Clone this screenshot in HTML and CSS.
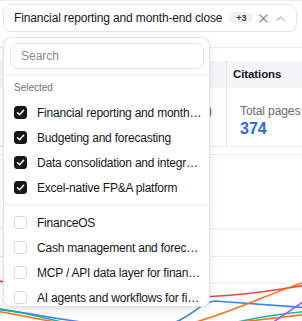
FILE: index.html
```html
<!DOCTYPE html>
<html>
<head>
<meta charset="utf-8">
<link rel="stylesheet" href="styles.css">
</head>
<body>
<div class="topline"></div>
<div class="trigger">
  <span class="trigger-label">Financial reporting and month-end close</span>
  <span class="badge">+3</span>
  <svg class="icon-x" width="9" height="9" viewBox="0 0 9 9"><path d="M1 1L8 8M8 1L1 8" stroke="#8a8a8a" stroke-width="1.2" stroke-linecap="round" fill="none"/></svg>
  <svg class="icon-chev" width="9" height="5" viewBox="0 0 9 5"><path d="M1 4.3L4.5 0.8L8 4.3" stroke="#b5b5b5" stroke-width="1.1" stroke-linecap="round" stroke-linejoin="round" fill="none"/></svg>
</div>

<section class="report">
  <div class="thead">
    <div class="cell c1"></div>
    <div class="cell c2 head">Citations</div>
  </div>
  <div class="tbody">
    <div class="cell c1 num">(100)</div>
    <div class="cell c2 body">
      <div class="muted">Total pages</div>
      <div class="big">374</div>
    </div>
  </div>
</section>

<div class="chart">
  <svg width="302" height="166" viewBox="0 155 302 166">
    <g stroke="#efefef" stroke-width="1">
      <line x1="0" y1="228.5" x2="302" y2="228.5"/>
      <line x1="0" y1="256.5" x2="302" y2="256.5"/>
      <line x1="0" y1="283.5" x2="302" y2="283.5"/>
    </g>
    <g fill="none" stroke-width="1.6" stroke-linecap="round">
      <path d="M-5,280 C60,295 150,300 211,296.5 S280,288 310,285" stroke="#ef4444"/>
      <path d="M-5,309 C50,315 100,330 160,326 C190,322 200,301 215,301 L310,308" stroke="#3b82f6"/>
      <path d="M-5,308 C50,316 100,336 150,336 C200,336 230,318 310,311" stroke="#14b8a6"/>
      <path d="M-5,311 C40,318 80,330 140,330 C200,330 250,300 310,280" stroke="#f97316"/>
      <path d="M232,323 L310,314" stroke="#f97316"/>
      <path d="M272,323 L310,297" stroke="#a855f7"/>
    </g>
  </svg>
</div>

<div class="dropdown">
  <div class="search-wrap">
    <div class="search">Search</div>
  </div>
  <div class="group first">
    <div class="group-label">Selected</div>
    <div class="item"><span class="box checked"><svg width="9" height="9" viewBox="0 0 9 9"><path d="M1.5 4.8L3.6 6.8L7.6 2.3" stroke="#fff" stroke-width="1.5" fill="none" stroke-linecap="round" stroke-linejoin="round"/></svg></span><span class="label">Financial reporting and month-end close</span></div>
    <div class="item"><span class="box checked"><svg width="9" height="9" viewBox="0 0 9 9"><path d="M1.5 4.8L3.6 6.8L7.6 2.3" stroke="#fff" stroke-width="1.5" fill="none" stroke-linecap="round" stroke-linejoin="round"/></svg></span><span class="label">Budgeting and forecasting</span></div>
    <div class="item"><span class="box checked"><svg width="9" height="9" viewBox="0 0 9 9"><path d="M1.5 4.8L3.6 6.8L7.6 2.3" stroke="#fff" stroke-width="1.5" fill="none" stroke-linecap="round" stroke-linejoin="round"/></svg></span><span class="label">Data consolidation and integration</span></div>
    <div class="item"><span class="box checked"><svg width="9" height="9" viewBox="0 0 9 9"><path d="M1.5 4.8L3.6 6.8L7.6 2.3" stroke="#fff" stroke-width="1.5" fill="none" stroke-linecap="round" stroke-linejoin="round"/></svg></span><span class="label">Excel-native FP&amp;A platform</span></div>
  </div>
  <div class="group second">
    <div class="item"><span class="box"></span><span class="label">FinanceOS</span></div>
    <div class="item"><span class="box"></span><span class="label">Cash management and forecasting</span></div>
    <div class="item"><span class="box"></span><span class="label">MCP / API data layer for finance teams</span></div>
    <div class="item"><span class="box"></span><span class="label">AI agents and workflows for finance</span></div>
  </div>
</div>
</body>
</html>
```

FILE: styles.css
```css
html, body {
  margin: 0;
  padding: 0;
}
body {
  width: 302px;
  height: 321px;
  overflow: hidden;
  position: relative;
  background: #fff;
  color: #171717;
  font-family: "Liberation Sans", Arial, sans-serif;
}

.topline {
  height: 1px;
  background: #ececec;
  margin-bottom: 3px;
}

.trigger {
  display: flex;
  align-items: center;
  box-sizing: border-box;
  width: 294px;
  height: 28px;
  margin: 0 3px;
  padding-left: 10px;
  border: 1px solid #e5e5e5;
  border-radius: 8px;
  background: #fff;
}
.trigger-label {
  font-size: 12px;
  letter-spacing: -0.15px;
  white-space: nowrap;
}
.badge {
  margin-left: 7px;
  width: 24px;
  height: 12px;
  border-radius: 6px;
  background: #f1f1f1;
  font-size: 9px;
  font-weight: bold;
  line-height: 12px;
  text-align: center;
  color: #3a3a3a;
}
.icon-x {
  margin-left: 6px;
}
.icon-chev {
  margin-left: 8px;
}

.report {
  margin-top: 15px;
  border-top: 1px solid #ececec;
  padding-top: 13px;
  border-bottom: 1px solid #ececec;
}
.thead {
  display: flex;
  height: 27px;
  background: #f5f5f7;
}
.tbody {
  display: flex;
  height: 58px;
}
.cell.c1 {
  width: 227px;
  border-right: 1px solid #e5e5e5;
  box-sizing: border-box;
}
.cell.c2 {
  flex: 1;
}
.head {
  font-size: 11.5px;
  font-weight: bold;
  letter-spacing: -0.1px;
  line-height: 27px;
  padding-left: 6px;
}
.num {
  font-size: 12px;
  color: #555;
  text-align: right;
  padding: 16px 14px 0 0;
}
.body {
  padding: 16px 0 0 13px;
  white-space: nowrap;
}
.muted {
  font-size: 12px;
  color: #6b6b6b;
  letter-spacing: -0.1px;
}
.big {
  margin-top: 2px;
  font-size: 16px;
  font-weight: bold;
  color: #2b6be8;
}

.chart {
  margin-top: 7px;
  border-top: 1px solid #efefef;
  height: 166px;
}
.chart svg {
  display: block;
}

.dropdown {
  position: absolute;
  left: 3px;
  top: 37px;
  width: 207px;
  height: 270px;
  box-sizing: border-box;
  border: 1px solid #e5e5e5;
  border-radius: 8px;
  background: #fff;
  box-shadow: 0 4px 10px rgba(0, 0, 0, 0.08), 0 1px 3px rgba(0, 0, 0, 0.05);
  overflow: hidden;
}
.search-wrap {
  padding: 5px 5px 6px 6px;
  border-bottom: 1px solid #ececec;
}
.search {
  box-sizing: border-box;
  height: 26px;
  border: 1px solid #e5e5e5;
  border-radius: 7px;
  padding-left: 10px;
  font-size: 12px;
  line-height: 24px;
  color: #8a8a8a;
}
.group.first {
  padding-bottom: 4px;
  border-bottom: 1px solid #ececec;
}
.group.second {
  padding-top: 5px;
}
.group-label {
  height: 24px;
  line-height: 24px;
  padding-left: 10px;
  font-size: 10px;
  color: #737373;
}
.item {
  display: flex;
  align-items: center;
  height: 25px;
  padding: 0 6px 0 10px;
  gap: 10px;
}
.box {
  flex: none;
  box-sizing: border-box;
  width: 13px;
  height: 13px;
  border-radius: 3px;
  border: 1px solid #dadada;
  background: #fff;
  display: flex;
  align-items: center;
  justify-content: center;
}
.box.checked {
  background: #171717;
  border-color: #171717;
}
.label {
  font-size: 12px;
  letter-spacing: -0.22px;
  white-space: nowrap;
  overflow: hidden;
  text-overflow: ellipsis;
  min-width: 0;
}
```
